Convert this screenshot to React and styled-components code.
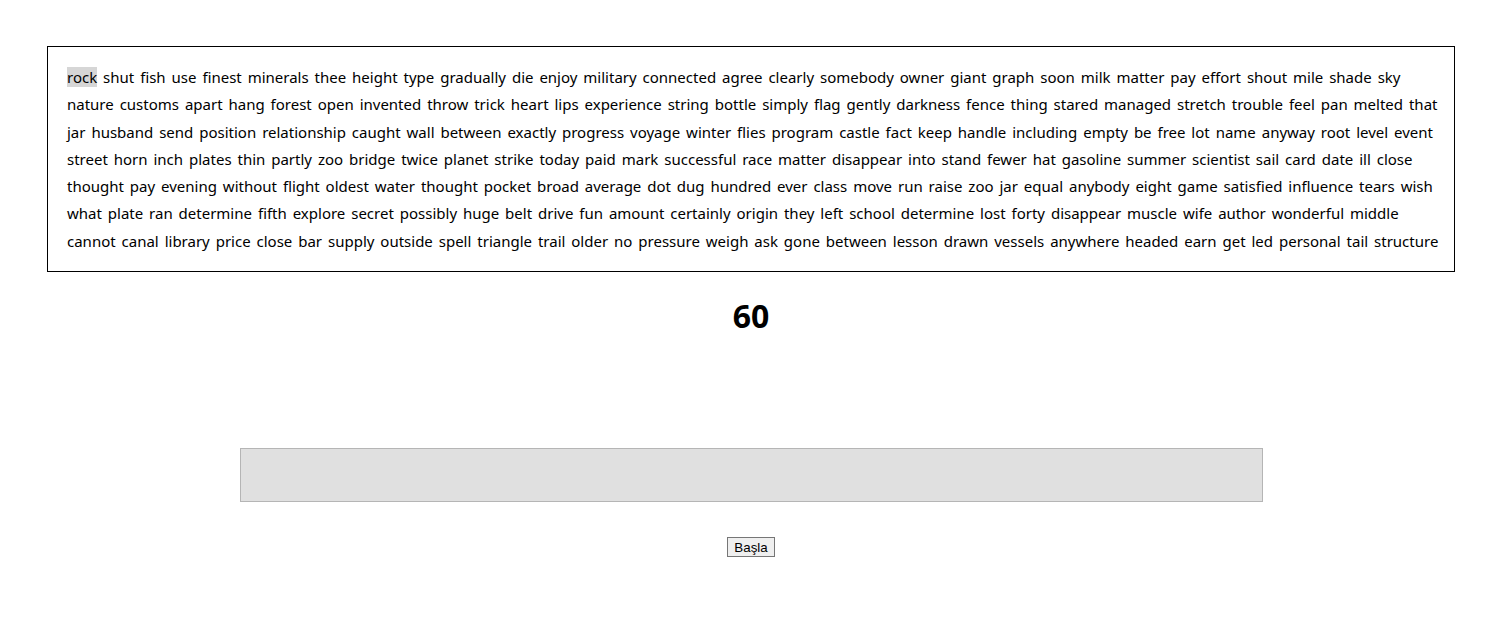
import React from "react";
import styled, { createGlobalStyle } from "styled-components";

const GlobalStyle = createGlobalStyle`
  html, body { margin: 0; padding: 0; background: #fff; }
  body { font-family: "Noto Sans", "Open Sans", sans-serif; color: #000; }
`;

const Page = styled.div`
  width: 1408px;
  margin-left: 47px;
  padding-top: 46px;
  display: flex;
  flex-direction: column;
  align-items: center;
`;

const WordBox = styled.div`
  box-sizing: border-box;
  width: 100%;
  border: 1px solid #000;
  padding: 17px 14px 16px 19px;
  font-size: 15px;
  line-height: 27.3px;
  word-spacing: 2px;
`;

const Word = styled.span`
  background: ${(p) => (p.$active ? "#d6d6d6" : "transparent")};
`;

const Timer = styled.div`
  margin-top: 24px;
  font-size: 32px;
  font-weight: 700;
  line-height: 40px;
`;

const TypeInput = styled.input`
  box-sizing: border-box;
  margin-top: 112px;
  width: 1023px;
  height: 54px;
  background: #e0e0e0;
  border: 1px solid #b5b5b5;
  outline: none;
`;

const StartButton = styled.button`
  margin-top: 35px;
  font-family: "Liberation Sans", Arial, sans-serif;
  font-size: 13.33px;
  padding: 1px 6px;
  height: 20px;
  background: #efefef;
  border: 1px solid #767676;
  border-radius: 0;
  color: #000;
`;

const text =
  "rock shut fish use finest minerals thee height type gradually die enjoy military connected agree clearly somebody owner giant graph soon milk matter pay effort shout mile shade sky nature customs apart hang forest open invented throw trick heart lips experience string bottle simply flag gently darkness fence thing stared managed stretch trouble feel pan melted that jar husband send position relationship caught wall between exactly progress voyage winter flies program castle fact keep handle including empty be free lot name anyway root level event street horn inch plates thin partly zoo bridge twice planet strike today paid mark successful race matter disappear into stand fewer hat gasoline summer scientist sail card date ill close thought pay evening without flight oldest water thought pocket broad average dot dug hundred ever class move run raise zoo jar equal anybody eight game satisfied influence tears wish what plate ran determine fifth explore secret possibly huge belt drive fun amount certainly origin they left school determine lost forty disappear muscle wife author wonderful middle cannot canal library price close bar supply outside spell triangle trail older no pressure weigh ask gone between lesson drawn vessels anywhere headed earn get led personal tail structure";

export default function App() {
  const words = text.split(" ");
  return (
    <>
      <GlobalStyle />
      <Page>
        <WordBox>
          {words.map((w, i) => (
            <React.Fragment key={i}>
              <Word $active={i === 0}>{w}</Word>{" "}
            </React.Fragment>
          ))}
        </WordBox>
        <Timer>60</Timer>
        <TypeInput type="text" />
        <StartButton>Başla</StartButton>
      </Page>
    </>
  );
}
